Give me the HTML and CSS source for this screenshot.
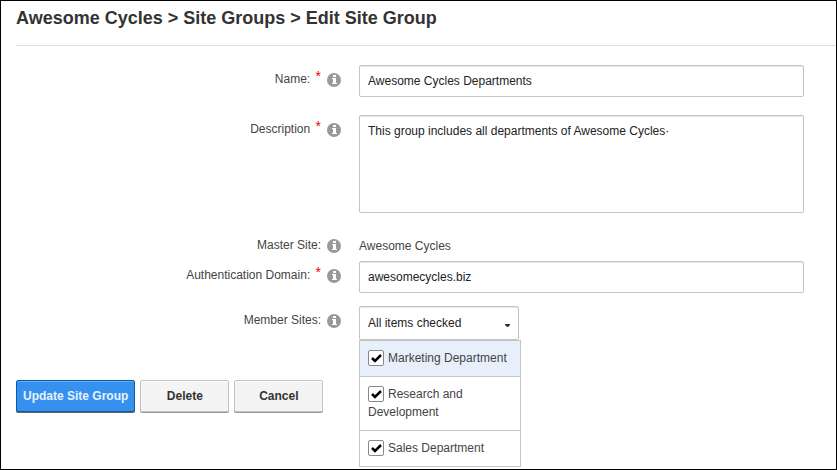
FILE: index.html
```html
<!DOCTYPE html>
<html lang="en">
<head>
<meta charset="utf-8">
<title>Edit Site Group</title>
<link rel="stylesheet" href="styles.css">
</head>
<body>
<svg width="0" height="0" class="sprite" aria-hidden="true">
  <symbol id="info" viewBox="0 0 14 14">
    <circle cx="7" cy="7" r="7" fill="#999"/>
    <path d="M6 2h3v2H6zM5 5h4v5h1v1H5v-1h1V6H5z" fill="#fff"/>
  </symbol>
</svg>
<main class="page">
  <h1 class="title">Awesome Cycles &gt; Site Groups &gt; Edit Site Group</h1>
  <form class="form">
    <div class="row">
      <label class="label" for="name">Name: <span class="required">*</span></label>
      <svg class="info"><use href="#info"/></svg>
      <input class="control" id="name" type="text" value="Awesome Cycles Departments">
    </div>
    <div class="row">
      <label class="label" for="description">Description <span class="required">*</span></label>
      <svg class="info"><use href="#info"/></svg>
      <textarea class="control control-area" id="description">This group includes all departments of Awesome Cycles·</textarea>
    </div>
    <div class="row row-static">
      <span class="label">Master Site:</span>
      <svg class="info"><use href="#info"/></svg>
      <span class="value">Awesome Cycles</span>
    </div>
    <div class="row row-domain">
      <label class="label" for="domain">Authentication Domain: <span class="required">*</span></label>
      <svg class="info"><use href="#info"/></svg>
      <input class="control" id="domain" type="text" value="awesomecycles.biz">
    </div>
    <div class="row row-members">
      <label class="label" for="members">Member Sites:</label>
      <svg class="info"><use href="#info"/></svg>
      <div class="dropdown">
        <select class="control select" id="members"><option>All items checked</option></select>
        <svg class="caret" viewBox="0 0 5 3"><path d="M0 0h5v1L3 3H2L0 1z" fill="#333"/></svg>
        <div class="menu">
          <label class="item item-active"><input class="check" type="checkbox" checked>Marketing Department</label>
          <label class="item"><input class="check" type="checkbox" checked>Research and Development</label>
          <label class="item"><input class="check" type="checkbox" checked>Sales Department</label>
        </div>
      </div>
    </div>
    <div class="actions">
      <button class="button button-primary" type="submit">Update Site Group</button>
      <button class="button" type="button">Delete</button>
      <button class="button" type="button">Cancel</button>
    </div>
  </form>
</main>
</body>
</html>
```
FILE: styles.css
```css
* {
  box-sizing: border-box;
}

body {
  margin: 0;
  background: #fff;
  color: #444;
  font: 12px/18px "Liberation Sans", Arial, sans-serif;
}

.sprite {
  position: absolute;
}

.page {
  min-height: 100vh;
  padding-left: 15px;
  border: 1px solid #000;
}

.title {
  margin: 0;
  padding: 6px 0 15px;
  border-bottom: 1px solid #ddd;
  color: #333;
  font-size: 18px;
  line-height: 23px;
}

.form {
  padding-top: 19px;
}

.row {
  display: grid;
  grid-template-columns: 61fr 38px 89fr;
  align-items: start;
  margin-bottom: 18px;
  padding-right: 32px;
}

.row-static {
  margin: 23px 0 6px;
}

.row-domain {
  margin-bottom: 13px;
}

.row-members {
  margin-bottom: 40px;
}

.label {
  padding-top: 5px;
  text-align: right;
}

.row-static .label {
  padding-top: 0;
}

.required {
  margin-left: 2px;
  color: #e00;
  font-size: 14px;
  line-height: 0;
  vertical-align: 2px;
}

.info {
  width: 14px;
  height: 14px;
  margin: 8px 0 0 6px;
}

.row-static .info {
  margin-top: 3px;
}

.value {
  padding-top: 1px;
}

.control {
  display: block;
  width: 100%;
  height: 32px;
  margin: 0;
  padding: 6px 8px;
  border: 1px solid #c4c4c4;
  border-radius: 2px;
  outline: 0;
  background: #fff;
  box-shadow: inset 0 1px 1px #e8e8e8;
  color: #222;
  font: inherit;
}

.control-area {
  height: 98px;
  resize: none;
}

.dropdown {
  position: relative;
  width: 160px;
}

.select {
  height: 34px;
  appearance: none;
}

.caret {
  position: absolute;
  top: 18px;
  right: 9px;
  width: 5px;
  height: 3px;
  pointer-events: none;
}

.menu {
  position: absolute;
  top: 100%;
  left: 0;
  width: 162px;
  border: 1px solid #c4c4c4;
  background: #fff;
}

.item {
  display: block;
  padding: 8px 8px 9px;
}

.item + .item {
  border-top: 1px solid #c4c4c4;
}

.item-active {
  background: #e7f0fa;
}

.check {
  width: 16px;
  height: 16px;
  margin: 0 4px 0 0;
  border: 1px solid #888;
  border-radius: 2px;
  appearance: none;
  background: #fff;
  vertical-align: -4px;
}

.check:checked {
  background: #fff url("data:image/svg+xml,%3Csvg xmlns='http://www.w3.org/2000/svg' viewBox='0 0 14 14'%3E%3Cpath d='M3 7l3 3 6-6' fill='none' stroke='%23000' stroke-width='2.5'/%3E%3C/svg%3E") center / 14px no-repeat;
}

.actions {
  display: flex;
  gap: 5px;
}

.button {
  min-width: 89px;
  height: 32px;
  padding: 0 6px;
  border: 1px solid #c4c4c4;
  border-radius: 2px;
  background: #f4f4f4;
  box-shadow: 0 1px 0 #999, inset 0 1px 0 #fff;
  color: #333;
  font: bold 12px/18px "Liberation Sans", Arial, sans-serif;
}

.button-primary {
  border-color: #1059a8;
  background: #3690ee;
  box-shadow: 0 1px 0 #666, inset 0 1px 0 #69aef5;
  color: #e6f2ff;
}
```
